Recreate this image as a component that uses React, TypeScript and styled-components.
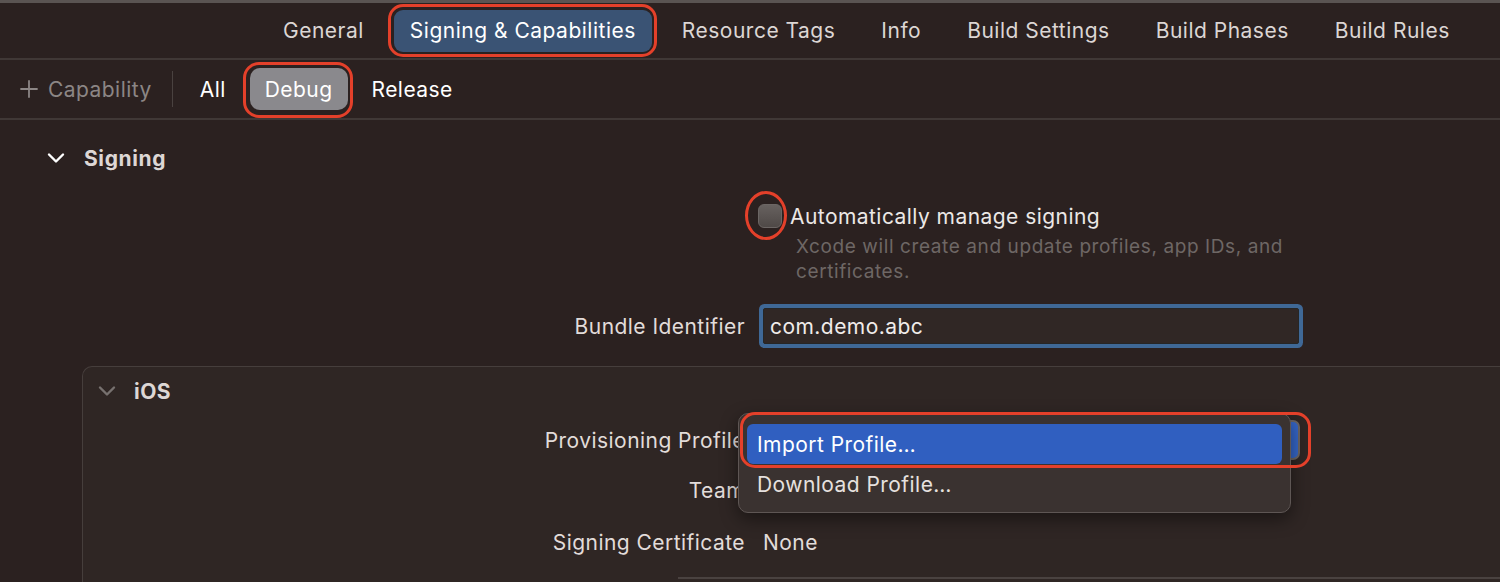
import React from "react";
import styled, { createGlobalStyle } from "styled-components";

const GlobalStyle = createGlobalStyle`
  html, body { margin: 0; padding: 0; }
  body {
    background: #2b2120;
    font-family: Inter, "Noto Sans", "Liberation Sans", sans-serif;
    color: #e2dddb;
    width: 1500px;
    height: 582px;
    overflow: hidden;
  }
`;

const Page = styled.div`
  width: 1500px;
  height: 582px;
  position: relative;
  overflow: hidden;
  background: #2b2120;
`;

const TopEdge = styled.div`
  height: 3px;
  background: #5a5452;
`;

const TabBar = styled.div`
  height: 55px;
  display: flex;
  align-items: center;
  gap: 14px;
  padding-left: 267px;
  border-bottom: 2px solid #403836;
`;

const Tab = styled.div<{ $active?: boolean }>`
  position: relative;
  height: 42px;
  padding: 0 16px;
  display: flex;
  align-items: center;
  border-radius: 9px;
  font-size: 21px;
  letter-spacing: 0.5px;
  color: ${(p) => (p.$active ? "#ffffff" : "#dcd6d4")};
  background: ${(p) => (p.$active ? "#3a5374" : "transparent")};
  white-space: nowrap;
`;

const Ring = styled.span<{ $t: number; $r: number; $b: number; $l: number; $radius: string }>`
  position: absolute;
  top: ${(p) => p.$t}px;
  right: ${(p) => p.$r}px;
  bottom: ${(p) => p.$b}px;
  left: ${(p) => p.$l}px;
  border: 3px solid #e4402a;
  border-radius: ${(p) => p.$radius};
  pointer-events: none;
  z-index: 5;
`;

const ConfigBar = styled.div`
  height: 58px;
  display: flex;
  align-items: center;
  padding-left: 20px;
  border-bottom: 2px solid #403836;
`;

const AddButton = styled.div`
  display: flex;
  align-items: center;
  gap: 10px;
  font-size: 21px;
  letter-spacing: 0.45px;
  color: #8c8685;
`;

const VDivider = styled.div`
  width: 1px;
  height: 36px;
  background: #4a4240;
  margin: 0 12px 0 20px;
`;

const ConfigItem = styled.div<{ $active?: boolean }>`
  position: relative;
  height: 42px;
  padding: 0 15px;
  margin-right: 9px;
  display: flex;
  align-items: center;
  border-radius: 10px;
  font-size: 21px;
  letter-spacing: 0.45px;
  color: #ffffff;
  background: ${(p) => (p.$active ? "#8a898d" : "transparent")};
`;

const SectionHeader = styled.div`
  display: flex;
  align-items: center;
  gap: 19px;
  padding-left: 47px;
  height: 40px;
  margin-top: 18px;
  font-size: 21px;
  letter-spacing: 0.6px;
  font-weight: 700;
  color: #ddd7d5;
`;

const Row = styled.div<{ $h: number }>`
  display: flex;
  align-items: center;
  height: ${(p) => p.$h}px;
`;

const Label = styled.div<{ $w: number }>`
  width: ${(p) => p.$w}px;
  text-align: right;
  font-size: 21px;
  letter-spacing: 0.45px;
  color: #e2dcda;
  flex-shrink: 0;
  white-space: nowrap;
`;

const Value = styled.div`
  position: relative;
  margin-left: 18px;
  font-size: 21px;
  letter-spacing: 0.45px;
  color: #e2dcda;
  display: flex;
  align-items: center;
`;

const CheckRow = styled.div`
  display: flex;
  align-items: center;
  margin-left: 758px;
  margin-top: 23px;
  height: 30px;
`;

const CheckWrap = styled.div`
  position: relative;
  width: 24px;
  height: 24px;
  margin-right: 8px;
`;

const Checkbox = styled.div`
  width: 24px;
  height: 24px;
  box-sizing: border-box;
  border-radius: 6px;
  background: linear-gradient(#67615f, #4f4947);
  border: 1px solid #6c6664;
`;

const CheckLabel = styled.div`
  font-size: 21px;
  letter-spacing: 0.45px;
  color: #ece8e6;
`;

const Description = styled.div`
  margin-left: 796px;
  margin-top: 3px;
  width: 520px;
  font-size: 19px;
  letter-spacing: 0.6px;
  line-height: 25px;
  color: #6e6765;
`;

const TextField = styled.div`
  width: 522px;
  height: 34px;
  padding: 0 6px;
  display: flex;
  align-items: center;
  background: #302725;
  border: 1px solid #262626;
  box-shadow: 0 0 0 4px #3f6896;
  border-radius: 2px;
  font-size: 21px;
  letter-spacing: 0.45px;
  color: #f0ecea;
`;

const PlatformBox = styled.div`
  margin-left: 82px;
  margin-top: 15px;
  height: 260px;
  background: #2f2624;
  border: 1px solid #463e3c;
  border-right: none;
  border-radius: 10px 0 0 0;
`;

const BoxHeader = styled.div`
  display: flex;
  align-items: center;
  gap: 18px;
  padding-left: 15px;
  height: 48px;
  font-size: 21px;
  letter-spacing: 0.5px;
  font-weight: 700;
  color: #ddd7d5;
`;

const PopupButton = styled.div`
  width: 537px;
  height: 40px;
  box-sizing: border-box;
  border-radius: 7px;
  background: #3565c6;
  border: 2px solid #6b6563;
`;

const Menu = styled.div`
  position: absolute;
  left: -25px;
  top: -7px;
  width: 553px;
  padding: 10px 8px 8px;
  box-sizing: border-box;
  background: #3a3230;
  border: 1px solid #5e5654;
  border-radius: 10px;
  box-shadow: 0 6px 18px rgba(0, 0, 0, 0.45);
  z-index: 3;
`;

const MenuItem = styled.div<{ $active?: boolean }>`
  position: relative;
  height: 40px;
  padding: 0 10px;
  display: flex;
  align-items: center;
  border-radius: 6px;
  font-size: 21px;
  letter-spacing: 0.45px;
  color: ${(p) => (p.$active ? "#ffffff" : "#e6e1df")};
  background: ${(p) => (p.$active ? "#305fc0" : "transparent")};
`;

const BottomRule = styled.div`
  position: absolute;
  left: 678px;
  right: 0;
  bottom: 3px;
  height: 2px;
  background: #4a4240;
`;

const Chevron = ({ color }: { color: string }) => (
  <svg width="18" height="12" viewBox="0 0 18 12">
    <path d="M2 2.5 L9 9.5 L16 2.5" fill="none" stroke={color} strokeWidth="2.4" strokeLinecap="round" strokeLinejoin="round" />
  </svg>
);

const Plus = () => (
  <svg width="18" height="18" viewBox="0 0 18 18">
    <path d="M9 1 V17 M1 9 H17" stroke="#8c8685" strokeWidth="1.8" strokeLinecap="round" />
  </svg>
);

const tabs = ["General", "Signing & Capabilities", "Resource Tags", "Info", "Build Settings", "Build Phases", "Build Rules"];

export default function App() {
  return (
    <Page>
      <GlobalStyle />
      <TopEdge />
      <TabBar>
        {tabs.map((t) => (
          <Tab key={t} $active={t === "Signing & Capabilities"}>
            {t}
            {t === "Signing & Capabilities" && <Ring $t={-6} $r={-5} $b={-5} $l={-6} $radius="15px" />}
          </Tab>
        ))}
      </TabBar>
      <ConfigBar>
        <AddButton>
          <Plus />
          Capability
        </AddButton>
        <VDivider />
        <ConfigItem>All</ConfigItem>
        <ConfigItem $active>
          Debug
          <Ring $t={-6} $r={-5} $b={-8} $l={-7} $radius="16px" />
        </ConfigItem>
        <ConfigItem>Release</ConfigItem>
      </ConfigBar>

      <SectionHeader>
        <Chevron color="#ffffff" />
        Signing
      </SectionHeader>

      <CheckRow>
        <CheckWrap>
          <Checkbox />
          <Ring $t={-13} $r={-5} $b={-12} $l={-13} $radius="50%" />
        </CheckWrap>
        <CheckLabel>Automatically manage signing</CheckLabel>
      </CheckRow>
      <Description>Xcode will create and update profiles, app IDs, and certificates.</Description>

      <Row $h={50} style={{ marginTop: 17 }}>
        <Label $w={745}>Bundle Identifier</Label>
        <Value>
          <TextField>com.demo.abc</TextField>
        </Value>
      </Row>

      <PlatformBox>
        <BoxHeader>
          <Chevron color="#77716f" />
          iOS
        </BoxHeader>
        <Row $h={50}>
          <Label $w={662}>Provisioning Profile</Label>
          <Value>
            <PopupButton />
            <Menu>
              <MenuItem $active>
                Import Profile…
                <Ring $t={-12} $r={-29} $b={-4} $l={-7} $radius="15px" />
              </MenuItem>
              <MenuItem>Download Profile…</MenuItem>
            </Menu>
          </Value>
        </Row>
        <Row $h={50}>
          <Label $w={662}>Team</Label>
        </Row>
        <Row $h={54}>
          <Label $w={662}>Signing Certificate</Label>
          <Value>None</Value>
        </Row>
      </PlatformBox>
      <BottomRule />
    </Page>
  );
}
